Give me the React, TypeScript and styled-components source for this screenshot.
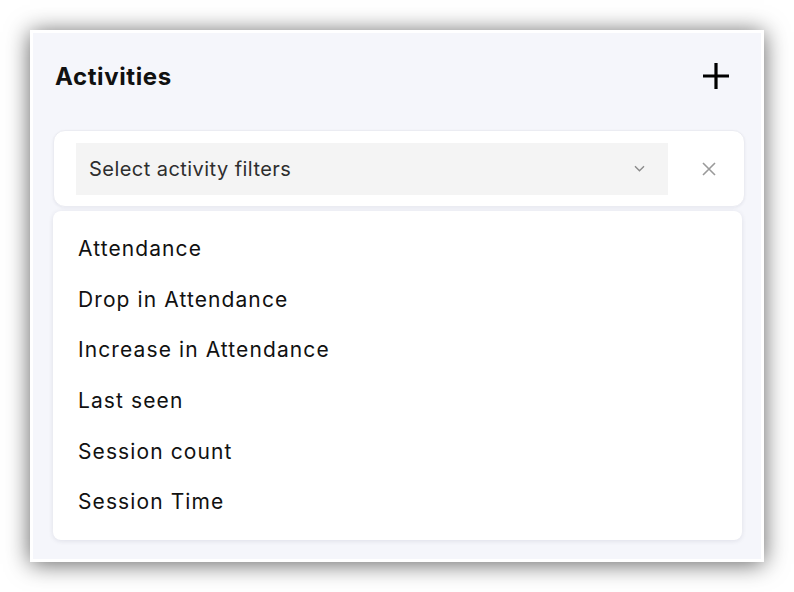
import React, { FC } from 'react';
import styled, { createGlobalStyle } from 'styled-components';

const GlobalStyle = createGlobalStyle`
  html, body {
    margin: 0;
    padding: 0;
    background: #ffffff;
    font-family: Inter, 'Noto Sans', sans-serif;
  }
`;

const Page = styled.div`
  padding: 30px;
`;

const Card = styled.div`
  width: 734px;
  height: 532px;
  box-sizing: border-box;
  border: 3px solid #ffffff;
  background-color: #f5f6fb;
  box-shadow: 0 2px 22px rgba(0, 0, 0, 0.62);
  display: flex;
  flex-direction: column;
  padding: 0 16px 0 20px;
`;

const Header = styled.div`
  height: 86px;
  margin-bottom: 11px;
  display: flex;
  flex-direction: row;
  justify-content: space-between;
  align-items: center;
  padding: 0 16px 0 2px;
`;

const Title = styled.h2`
  margin: 0;
  font-size: 24px;
  font-weight: 700;
  letter-spacing: 0.6px;
  color: #111111;
`;

const AddButton = styled.button`
  border: 0;
  background: none;
  padding: 0;
  width: 26px;
  height: 26px;
  display: flex;
  cursor: pointer;
`;

const FilterBox = styled.div`
  width: 692px;
  height: 77px;
  box-sizing: border-box;
  background: #ffffff;
  border: 1px solid #ebecf2;
  border-radius: 12px;
  box-shadow: 0 1px 3px rgba(20, 20, 60, 0.06);
  display: flex;
  flex-direction: row;
  align-items: center;
  padding: 0 0 0 22px;
`;

const Select = styled.div`
  width: 592px;
  height: 52px;
  background: #f4f4f4;
  display: flex;
  align-items: center;
  justify-content: space-between;
  padding: 0 23px 0 13px;
  box-sizing: border-box;
  font-size: 20px;
  letter-spacing: 0.45px;
  color: #2e2e2e;
`;

const ClearButton = styled.button`
  border: 0;
  background: none;
  padding: 0;
  margin-left: 33px;
  width: 16px;
  height: 16px;
  display: flex;
  cursor: pointer;
`;

const Dropdown = styled.ul`
  list-style: none;
  margin: 4px 0 0;
  width: 689px;
  height: 329px;
  box-sizing: border-box;
  padding: 12px 0 13px;
  background: #ffffff;
  border-radius: 8px;
  box-shadow: 0 1px 5px rgba(30, 30, 70, 0.1);
`;

const Option = styled.li`
  height: 50.7px;
  display: flex;
  align-items: center;
  padding-left: 25px;
  font-size: 21px;
  letter-spacing: 1.1px;
  color: #111111;
`;

const options = [
  'Attendance',
  'Drop in Attendance',
  'Increase in Attendance',
  'Last seen',
  'Session count',
  'Session Time',
];

const App: FC = () => (
  <Page>
    <GlobalStyle />
    <Card>
      <Header>
        <Title>Activities</Title>
        <AddButton aria-label="Add">
          <svg width="26" height="26" viewBox="0 0 26 26">
            <path d="M13 0v26M0 13h26" stroke="#000" strokeWidth="3.2" />
          </svg>
        </AddButton>
      </Header>
      <FilterBox>
        <Select>
          <span>Select activity filters</span>
          <svg width="11" height="7" viewBox="0 0 11 7">
            <path d="M1 1.2l4.5 4.5 4.5-4.5" stroke="#8a8a8a" strokeWidth="1.4" fill="none" />
          </svg>
        </Select>
        <ClearButton aria-label="Clear">
          <svg width="16" height="16" viewBox="0 0 16 16">
            <path d="M2 2l12 12M14 2L2 14" stroke="#9a9a9a" strokeWidth="1.6" />
          </svg>
        </ClearButton>
      </FilterBox>
      <Dropdown>
        {options.map((o) => (
          <Option key={o}>{o}</Option>
        ))}
      </Dropdown>
    </Card>
  </Page>
);

export default App;
